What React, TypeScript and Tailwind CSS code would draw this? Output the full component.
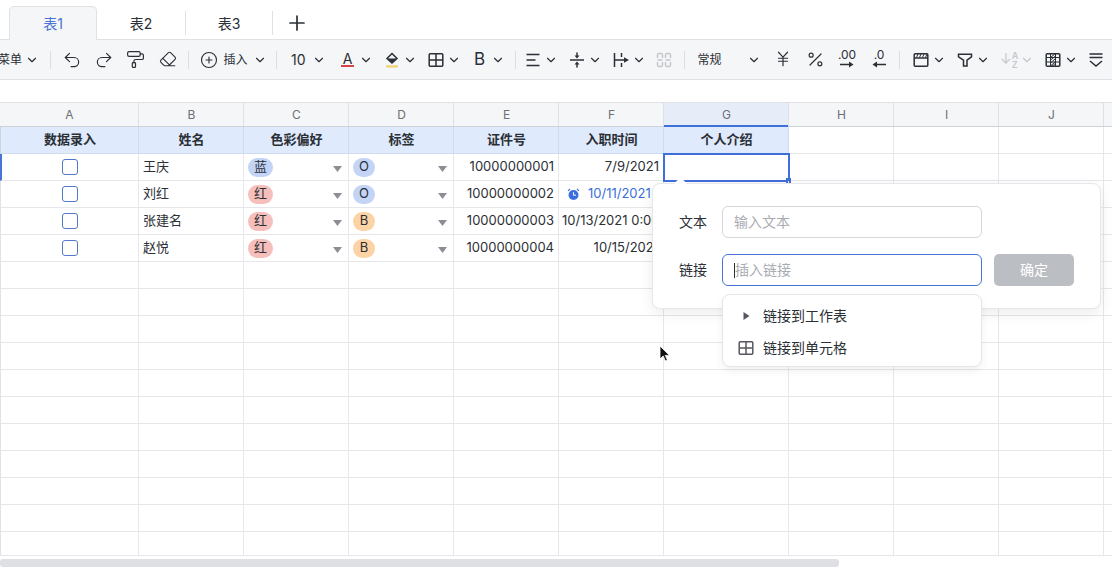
import { ChevronDown, CirclePlus, Eraser, JapaneseYen, PaintRoller, Percent, Plus, Redo2, Undo2 } from 'lucide-react'
import type { ReactNode } from 'react'

const columns = ['A', 'B', 'C', 'D', 'E', 'F', 'G', 'H', 'I', 'J', '']

const people = [
  { name: '王庆', color: '蓝', tag: 'O', id: '10000000001' },
  { name: '刘红', color: '红', tag: 'O', id: '10000000002' },
  { name: '张建名', color: '红', tag: 'B', id: '10000000003' },
  { name: '赵悦', color: '红', tag: 'B', id: '10000000004' },
]

const headers = ['数据录入', '姓名', '色彩偏好', '标签', '证件号', '入职时间', '个人介绍']

function Chevron({ muted }: { muted?: boolean }) {
  return <ChevronDown size={14} strokeWidth={2} className={`shrink-0 ${muted ? 'text-[#c4c7cc]' : 'text-[#2b2f36]'}`} />
}

function Sep() {
  return (
    <div className="flex w-[9px] justify-center">
      <div className="h-[18px] w-px bg-[#dcdee2]" />
    </div>
  )
}

function One({ children }: { children: ReactNode }) {
  return <div className="flex w-[32px] justify-center">{children}</div>
}

// icon plus chevron, 44px wide
function Combo({ children, muted }: { children: ReactNode; muted?: boolean }) {
  return (
    <div className="flex w-[44px] items-center">
      <div className="flex w-[26px] justify-center">{children}</div>
      <div className="flex w-[10px] justify-center">
        <Chevron muted={muted} />
      </div>
    </div>
  )
}

function Svg({ children, className }: { children: ReactNode; className?: string }) {
  return (
    <svg width="18" height="18" viewBox="0 0 18 18" fill="none" stroke="currentColor" strokeWidth="1.5" className={className ?? 'text-[#2b2f36]'}>
      {children}
    </svg>
  )
}

function GridIcon({ className }: { className?: string }) {
  return (
    <Svg className={className}>
      <rect x="2.2" y="2.7" width="13.6" height="12.6" rx="1" />
      <path d="M9 2.7v12.6M2.2 9h13.6" />
    </Svg>
  )
}

function ArrowMark({ left }: { left?: boolean }) {
  return (
    <svg width="14" height="7" viewBox="0 0 14 7" className="text-[#2b2f36]">
      <path d={left ? 'M14 3.5H4' : 'M0 3.5h10'} stroke="currentColor" strokeWidth="1.5" />
      <path d={left ? 'M5 0.5v6L0.5 3.5Z' : 'M9 0.5v6l4.5-3Z'} fill="currentColor" />
    </svg>
  )
}

function Toolbar() {
  return (
    <div className="flex h-[40px] shrink-0 items-center border-b border-[#dfe1e5] bg-[#f5f6f8] text-[#2b2f36]">
      <div className="-ml-[2px] flex w-[48px] items-center">
        <span className="w-[25px] text-[12px]">菜单</span>
        <div className="ml-[2px]">
          <Chevron />
        </div>
      </div>
      <Sep />
      <div className="ml-px flex">
        <One><Undo2 size={20} strokeWidth={1.4} /></One>
        <One><Redo2 size={20} strokeWidth={1.4} /></One>
        <One><PaintRoller size={19} strokeWidth={1.5} /></One>
        <One><Eraser size={18} strokeWidth={1.5} /></One>
      </div>
      <Sep />
      <div className="flex w-[80px] items-center">
        <div className="flex w-[32px] justify-center">
          <CirclePlus size={18} strokeWidth={1.5} />
        </div>
        <span className="-ml-px w-[26px] text-[12px]">插入</span>
        <div className="ml-[3px]">
          <Chevron />
        </div>
      </div>
      <Sep />
      <div className="flex w-[52px] items-center">
        <span className="ml-[10px] w-[21px] text-[14px]">10</span>
        <Chevron />
      </div>
      <div className="ml-[2px] flex">
        <Combo>
          <div className="flex flex-col items-center leading-none">
            <span className="text-[14px] leading-[13px]">A</span>
            <div className="h-[2px] w-[13px] bg-[#d64545]" />
          </div>
        </Combo>
        <Combo>
          <Svg>
            <path d="M9 2.5 4 7.5l5 4.5 5-4.5-5-5Z" />
            <path d="M4 7.5h10l-5 4.5Z" fill="currentColor" stroke="none" />
            <rect x="3" y="14.2" width="12" height="2.4" fill="#f2d37c" stroke="none" />
          </Svg>
        </Combo>
        <Combo><GridIcon /></Combo>
        <Combo><span className="text-[17px] font-normal leading-none">B</span></Combo>
      </div>
      <Sep />
      <div className="flex">
        <Combo>
          <Svg><path d="M2.5 3.5h13M2.5 9h9M2.5 14.5h13" /></Svg>
        </Combo>
        <Combo>
          <Svg>
            <path d="M2 9h14M9 1.5v4M9 12.5v4" />
            <path d="M6.5 4.5h5L9 7.5ZM6.5 13.5h5L9 10.5Z" fill="currentColor" stroke="none" />
          </Svg>
        </Combo>
        <Combo>
          <Svg>
            <path d="M2.5 2v14M9.5 2v4M9.5 12v4M2.5 9h10" />
            <path d="M12 6.2 17 9l-5 2.8Z" fill="currentColor" stroke="none" />
          </Svg>
        </Combo>
      </div>
      <div className="ml-[3px] flex w-[20px] justify-center">
        <Svg className="text-[#c4c7cc]">
          <path d="M2.5 7V4a1.5 1.5 0 0 1 1.5-1.5h2A1.5 1.5 0 0 1 7.5 4v3M10.5 7V4A1.5 1.5 0 0 1 12 2.5h2A1.5 1.5 0 0 1 15.5 4v3" />
          <path d="M2.5 11v3A1.5 1.5 0 0 0 4 15.5h2A1.5 1.5 0 0 0 7.5 14v-3M10.5 11v3a1.5 1.5 0 0 0 1.5 1.5h2a1.5 1.5 0 0 0 1.5-1.5v-3" />
          <path d="M2.5 9h5M10.5 9h5" />
        </Svg>
      </div>
      <div className="ml-[6px]">
        <Sep />
      </div>
      <span className="ml-[8px] w-[50px] text-[12px]">常规</span>
      <Chevron />
      <div className="ml-[6px] flex">
        <One><JapaneseYen size={18} strokeWidth={1.6} /></One>
        <One><Percent size={19} strokeWidth={1.5} /></One>
        <One>
          <div className="flex flex-col items-center gap-[1px]">
            <span className="text-[12px] leading-[10px]">.00</span>
            <ArrowMark />
          </div>
        </One>
        <One>
          <div className="flex flex-col items-center gap-[1px]">
            <span className="text-[12px] leading-[10px]">.0</span>
            <ArrowMark left />
          </div>
        </One>
      </div>
      <Sep />
      <div className="ml-[4px] flex">
        <Combo>
          <Svg>
            <rect x="2.2" y="2.7" width="13.6" height="12.6" rx="1" />
            <path d="M2.2 7h13.6" />
            <path d="M4.5 6.5 6 3M7.5 6.5 9 3M10.5 6.5 12 3M13.5 6.5 15 3" strokeWidth="1" />
          </Svg>
        </Combo>
        <Combo>
          <Svg><path d="M2.5 3.2h13v2.6L11 9.2V15H7.5V9.2L2.5 5.8Z" /></Svg>
        </Combo>
        <Combo muted>
          <div className="relative flex h-[18px] w-[18px] text-[#c4c7cc]">
            <span className="mt-[1px] text-[14px] leading-[14px]">↓</span>
            <div className="flex flex-col text-[9px] font-semibold leading-[9px]">
              <span>A</span>
              <span>Z</span>
            </div>
          </div>
        </Combo>
        <Combo>
          <Svg>
            <rect x="2.2" y="2.7" width="13.6" height="12.6" rx="1" />
            <path d="M6.5 2.7v12.6M11.5 2.7v12.6M2.2 6.5h13.6M2.2 11h13.6" strokeWidth="1" />
            <path d="M6.5 6.5l5-4M6.5 9l5-4M6.5 12l5-4.5M6.5 15l5-4.5M8 15.3l3.5-3" strokeWidth="1" />
          </Svg>
        </Combo>
      </div>
      <div className="-ml-[4px]">
        <One>
          <Svg>
            <path d="M2.5 3h13M2.5 6.5h13M3 10l6 5 6-5" />
          </Svg>
        </One>
      </div>
    </div>
  )
}

function Pill({ label, tone, wide }: { label: string; tone: string; wide?: boolean }) {
  return (
    <span className={`flex h-[19px] items-center justify-center rounded-full text-[13px] ${wide ? 'w-[25px]' : 'w-[22px]'} ${tone}`}>
      {label}
    </span>
  )
}

function Triangle() {
  return (
    <svg width="9" height="6" viewBox="0 0 9 6" className="mt-[3px] text-[#8b8e94]">
      <path d="M0 0h9L4.5 6Z" fill="currentColor" />
    </svg>
  )
}

function AlarmIcon() {
  return (
    <svg width="13" height="13" viewBox="0 0 13 13" className="shrink-0">
      <circle cx="6.5" cy="7" r="5" fill="#3a6fe0" />
      <path d="M6.5 4.2V7.2H9" fill="none" stroke="#fff" strokeWidth="1" />
      <path d="M1 2.8 3 1M12 2.8 10 1" fill="none" stroke="#3a6fe0" strokeWidth="1.1" />
    </svg>
  )
}

function DateCell({ index }: { index: number }) {
  if (index === 0) return <div className="flex h-full items-center justify-end pr-[4px]">7/9/2021</div>
  if (index === 1)
    return (
      <div className="flex h-full items-center gap-[8px] pl-[8px] text-[#3a6fd8]">
        <AlarmIcon />
        <span>10/11/2021</span>
      </div>
    )
  if (index === 2) return <div className="flex h-full items-center overflow-hidden whitespace-nowrap pl-[3px]">10/13/2021 0:00</div>
  return <div className="flex h-full items-center justify-end pr-[4px]">10/15/2021</div>
}

const rowCell = 'h-[27px] border-b border-r border-[#e6e7ea]'
const gridCols = 'grid grid-cols-[139px_105px_105px_105px_105px_105px_125px_105px_105px_105px_105px]'

function Sheet() {
  return (
    <div className="relative min-h-0 flex-1 overflow-hidden">
      <div className={`${gridCols} text-[13px] text-[#2b2f36]`}>
        {headers.map((h, i) => (
          <div
            key={h}
            className={`relative flex h-[27px] items-center justify-center border-b border-r border-[#cfdcf0] bg-[#dfeafc] pl-px font-semibold ${i === 0 ? 'border-l border-l-[#cfd2d6]' : ''}`}
          >
            {h}
          </div>
        ))}
        {Array.from({ length: 4 }).map((_, i) => (
          <div key={i} className={rowCell} />
        ))}

        {people.map((p, i) => (
          <div key={p.id} className="contents">
            <div className={`${rowCell} flex items-center justify-center ${i === 0 ? 'border-l-2 border-l-[#4a74d4]' : 'border-l border-l-[#e0e2e5]'}`}>
              <div className="h-[16px] w-[16px] rounded-[3px] border-[1.5px] border-[#5279cb] bg-white" />
            </div>
            <div className={`${rowCell} flex items-center pl-[4px]`}>{p.name}</div>
            <div className={`${rowCell} flex items-center justify-between pl-[4px] pr-[6px]`}>
              <Pill label={p.color} wide tone={p.color === '蓝' ? 'bg-[#c3d4f7]' : 'bg-[#f6bfbb]'} />
              <Triangle />
            </div>
            <div className={`${rowCell} flex items-center justify-between pl-[4px] pr-[6px]`}>
              <Pill label={p.tag} tone={p.tag === 'O' ? 'bg-[#c3d4f7]' : 'bg-[#fbd3a4]'} />
              <Triangle />
            </div>
            <div className={`${rowCell} flex items-center justify-end pr-[4px]`}>{p.id}</div>
            <div className={rowCell}>
              <DateCell index={i} />
            </div>
            <div className={`${rowCell} relative`}>
              {i === 0 && (
                <div className="absolute -left-px -top-px h-[29px] w-[127px] border-2 border-[#3f6fdb]">
                  <div className="absolute -bottom-[3px] -right-[3px] h-[5px] w-[5px] bg-[#3f6fdb]" />
                </div>
              )}
            </div>
            {Array.from({ length: 4 }).map((_, k) => (
              <div key={k} className={rowCell} />
            ))}
          </div>
        ))}

        {Array.from({ length: 11 * 11 }).map((_, i) => (
          <div key={i} className={`${rowCell} ${i % 11 === 0 ? 'border-l border-l-[#e0e2e5]' : ''}`} />
        ))}
      </div>
      <LinkPopover />
      <svg width="12" height="17" viewBox="0 0 12 17" className="absolute left-[659px] top-[218px]">
        <path d="M1 1v13l3.2-3 2.2 5 2-1-2.2-4.6H10.5Z" fill="#111" stroke="#fff" strokeWidth="0.8" />
      </svg>
    </div>
  )
}

function LinkPopover() {
  return (
    <div className="absolute left-[652px] top-[56px] h-[126px] w-[449px] rounded-[8px] border border-[#e6e7ea] bg-white pl-[26px] pt-[22px] text-[14px] text-[#2b2f36] shadow-[0_4px_14px_rgba(0,0,0,0.08)]">
      <div className="absolute -top-[5px] left-[23px] h-[9px] w-[9px] rotate-45 bg-white" />
      <div className="flex h-[32px] items-center">
        <span className="w-[43px] pb-[2px]">文本</span>
        <div className="flex h-[32px] w-[260px] items-center rounded-[6px] border border-[#d5d7db] pb-[2px] pl-[11px] text-[#a9acb2]">输入文本</div>
      </div>
      <div className="mt-[16px] flex h-[32px] items-center">
        <span className="w-[43px] pb-[2px]">链接</span>
        <div className="flex h-[32px] w-[260px] items-center rounded-[6px] border border-[#4a74d4] pl-[11px] text-[#a9acb2]">
          <div className="h-[15px] w-px bg-[#2b2f36]" />
          <span className="pb-[2px]">插入链接</span>
        </div>
        <button className="ml-[12px] h-[32px] w-[80px] rounded-[5px] bg-[#bbbec3] pb-[2px] text-white">确定</button>
      </div>
      <div className="absolute left-[69px] top-[110px] w-[260px] rounded-[8px] border border-[#e4e5e8] bg-white pb-[2px] pt-[5px] shadow-[0_4px_10px_rgba(0,0,0,0.06)]">
        <div className="flex h-[32px] items-center">
          <div className="flex w-[40px] justify-center pl-[6px]">
            <svg width="7" height="8" viewBox="0 0 7 8" className="text-[#55585e]">
              <path d="M0.5 0v8L6.5 4Z" fill="currentColor" />
            </svg>
          </div>
          <span className="pb-[2px]">链接到工作表</span>
        </div>
        <div className="flex h-[32px] items-center">
          <div className="flex w-[40px] justify-center pl-[6px]">
            <GridIcon className="text-[#55585e]" />
          </div>
          <span className="pb-[2px]">链接到单元格</span>
        </div>
      </div>
    </div>
  )
}

export default function App() {
  return (
    <div className="flex h-[570px] w-[1112px] flex-col overflow-hidden bg-white font-['Inter','Noto_Sans_CJK_SC',sans-serif]">
      <div className="flex h-[40px] shrink-0 items-end border-b border-[#dfe1e5] pl-[9px] text-[14px] text-[#2b2f36]">
        <div className="-mb-px flex h-[34px] w-[88px] items-center justify-center rounded-t-[5px] border border-b-0 border-[#dfe1e5] bg-[#f5f6f8] text-[#4a74d4]">表1</div>
        <div className="flex h-[24px] w-[89px] -translate-y-[4px] items-center justify-center border-r border-[#dfe1e5]">表2</div>
        <div className="flex h-[24px] w-[87px] -translate-y-[4px] items-center justify-center border-r border-[#dfe1e5]">表3</div>
        <div className="flex h-[24px] w-[48px] -translate-y-[4px] items-center justify-center">
          <Plus size={24} strokeWidth={1.7} />
        </div>
      </div>
      <Toolbar />
      <div className="h-[23px] shrink-0 border-b border-[#dfe1e5] bg-white" />
      <div className={`${gridCols} h-[24px] shrink-0 border-b border-[#cfd2d6] bg-[#f5f6f8] text-[12px] text-[#6b6f76]`}>
        {columns.map((c) => (
          <div key={c} className={`relative flex items-center justify-center border-r border-[#dfe1e5] pl-px ${c === 'G' ? 'bg-[#e6edf9]' : ''}`}>
            {c}
            {c === 'G' && <div className="absolute -bottom-px left-0 right-0 h-[2px] bg-[#3f6fdb]" />}
          </div>
        ))}
      </div>
      <Sheet />
      <div className="flex h-[15px] shrink-0 items-center border-t border-[#e6e7ea] bg-white">
        <div className="h-[8px] w-[839px] rounded-[3px] bg-[#dfe0e3]" />
      </div>
    </div>
  )
}
